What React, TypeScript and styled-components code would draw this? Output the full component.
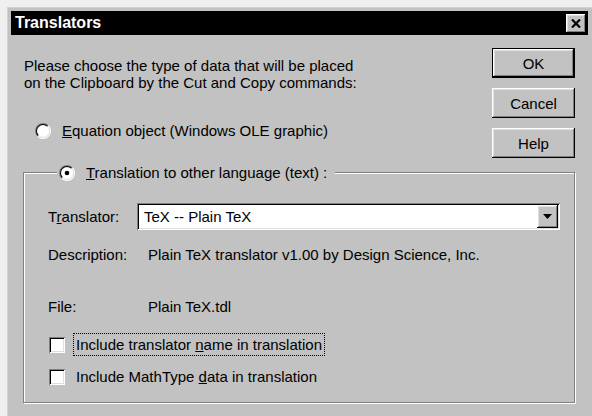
import React from 'react';
import styled, { createGlobalStyle } from 'styled-components';

const face = '#c2c2c2';

const GlobalStyle = createGlobalStyle`
  html, body {
    margin: 0;
    padding: 0;
    background: #efefef;
  }
  body {
    font-family: "Liberation Sans", Arial, sans-serif;
    font-size: 15px;
    color: #000;
  }
`;

const Screen = styled.div`
  width: 592px;
  height: 416px;
  overflow: hidden;
`;

const Window = styled.div`
  box-sizing: border-box;
  margin: 7px 0 0 7px;
  width: 585px;
  height: 409px;
  padding: 3px 4px 0 3px;
  background: ${face};
  border-top: 1px solid #d2d2d2;
  border-left: 1px solid #d2d2d2;
  display: flex;
  flex-direction: column;
`;

const TitleBar = styled.div`
  height: 24px;
  background: #000;
  display: flex;
  align-items: center;
  justify-content: space-between;
  padding: 0 2px 0 4px;
`;

const Title = styled.span`
  color: #fff;
  font-weight: bold;
  font-size: 16px;
`;

const Bevel = styled.button`
  box-sizing: border-box;
  background: ${face};
  border: none;
  padding: 0;
  font: inherit;
  color: #000;
  box-shadow: inset -1px -1px #000, inset 1px 1px #fff, inset -2px -2px #808080, inset 2px 2px #dfdfdf;
  display: flex;
  align-items: center;
  justify-content: center;
`;

const CloseButton = styled(Bevel)`
  width: 20px;
  height: 19px;
`;

const TopSection = styled.div`
  display: flex;
  justify-content: space-between;
`;

const Intro = styled.div`
  display: flex;
  flex-direction: column;
  padding: 22px 0 0 13px;
`;

const Prompt = styled.p`
  margin: 0;
  line-height: 17px;
`;

const ButtonColumn = styled.div`
  display: flex;
  flex-direction: column;
  gap: 10px;
  padding: 13px 13px 0 0;
`;

const PushButton = styled(Bevel)<{ $default?: boolean }>`
  width: 83px;
  height: 30px;
  border: ${(p) => (p.$default ? '1px solid #000' : 'none')};
`;

const OptionRow = styled.label`
  display: flex;
  align-items: center;
  gap: 11px;
  height: 17px;
  line-height: 17px;
  white-space: nowrap;
`;

const EquationOption = styled(OptionRow)`
  margin: 31px 0 0 11px;
`;

const Group = styled.fieldset`
  margin: 6px 13px 0 12px;
  padding: 22px 14px 14px 24px;
  border: 1px solid #808080;
  box-shadow: inset 1px 1px #fff, 1px 1px #fff;
  min-inline-size: 0;
`;

const Caption = styled.legend`
  margin-left: 9px;
  padding: 0 8px 0 2px;
  background: ${face};
`;

const TranslatorRow = styled.div`
  display: flex;
  align-items: center;
  height: 27px;
`;

const FieldLabel = styled.span<{ $width: number }>`
  width: ${(p) => p.$width}px;
  flex-shrink: 0;
  line-height: 17px;
`;

const Combo = styled.div`
  flex: 1;
  box-sizing: border-box;
  height: 27px;
  background: #fff;
  display: flex;
  align-items: center;
  justify-content: space-between;
  padding: 2px 2px 2px 7px;
  box-shadow: inset 1px 1px #808080, inset -1px -1px #fff, inset 2px 2px #000, inset -2px -2px #dfdfdf;
`;

const DropButton = styled(Bevel)`
  width: 21px;
  height: 23px;
`;

const InfoRow = styled.div<{ $top: number }>`
  display: flex;
  margin-top: ${(p) => p.$top}px;
  line-height: 17px;
`;

const CheckRow = styled.label<{ $top: number }>`
  display: flex;
  align-items: center;
  gap: 8px;
  margin: ${(p) => p.$top}px 0 0 1px;
  height: 23px;
`;

const CheckBox = styled.span`
  box-sizing: border-box;
  width: 16px;
  height: 16px;
  background: #fff;
  box-shadow: inset 1px 1px #808080, inset -1px -1px #fff, inset 2px 2px #000, inset -2px -2px #dfdfdf;
`;

const CheckText = styled.span<{ $focused?: boolean }>`
  padding: 2px;
  line-height: 17px;
  border: 1px dotted ${(p) => (p.$focused ? '#000' : 'transparent')};
`;

// classic sunken radio button, split along the diagonal into shadow and light halves
function Radio({ checked }: { checked?: boolean }) {
  const half = (r: number, upper: boolean, fill: string) => {
    const d = r / Math.SQRT2;
    const bl = `${8 - d} ${8 + d}`;
    const tr = `${8 + d} ${8 - d}`;
    const path = upper ? `M${bl} A${r} ${r} 0 0 1 ${tr} Z` : `M${tr} A${r} ${r} 0 0 1 ${bl} Z`;
    return <path d={path} fill={fill} />;
  };
  return (
    <svg width="16" height="16" viewBox="0 0 16 16">
      {half(8, true, '#808080')}
      {half(8, false, '#fff')}
      {half(7, true, '#000')}
      {half(7, false, '#dfdfdf')}
      <circle cx="8" cy="8" r="6" fill="#fff" />
      {checked && <circle cx="8" cy="8" r="2.3" fill="#000" />}
    </svg>
  );
}

export default function App(): JSX.Element {
  return (
    <Screen>
      <GlobalStyle />
      <Window>
        <TitleBar>
          <Title>Translators</Title>
          <CloseButton>
            <svg width="10" height="9" viewBox="0 0 10 9">
              <path d="M1 0.5 L9 8.5 M9 0.5 L1 8.5" stroke="#000" strokeWidth="2.2" />
            </svg>
          </CloseButton>
        </TitleBar>

        <TopSection>
          <Intro>
            <Prompt>Please choose the type of data that will be placed</Prompt>
            <Prompt>on the Clipboard by the Cut and Copy commands:</Prompt>
            <EquationOption>
              <Radio />
              <span><u>E</u>quation object (Windows OLE graphic)</span>
            </EquationOption>
          </Intro>
          <ButtonColumn>
            <PushButton $default>OK</PushButton>
            <PushButton>Cancel</PushButton>
            <PushButton>Help</PushButton>
          </ButtonColumn>
        </TopSection>

        <Group>
          <Caption>
            <OptionRow>
              <Radio checked />
              <span><u>T</u>ranslation to other language (text) :</span>
            </OptionRow>
          </Caption>

          <TranslatorRow>
            <FieldLabel $width={89}>T<u>r</u>anslator:</FieldLabel>
            <Combo>
              <span>TeX -- Plain TeX</span>
              <DropButton>
                <svg width="9" height="5" viewBox="0 0 9 5">
                  <path d="M0 0 H9 L4.5 5 Z" fill="#000" />
                </svg>
              </DropButton>
            </Combo>
          </TranslatorRow>

          <InfoRow $top={16}>
            <FieldLabel $width={100}>Description:</FieldLabel>
            <span>Plain TeX translator v1.00 by Design Science, Inc.</span>
          </InfoRow>
          <InfoRow $top={35}>
            <FieldLabel $width={100}>File:</FieldLabel>
            <span>Plain TeX.tdl</span>
          </InfoRow>

          <CheckRow $top={18}>
            <CheckBox />
            <CheckText $focused>Include translator <u>n</u>ame in translation</CheckText>
          </CheckRow>
          <CheckRow $top={9}>
            <CheckBox />
            <CheckText>Include MathType <u>d</u>ata in translation</CheckText>
          </CheckRow>
        </Group>
      </Window>
    </Screen>
  );
}
